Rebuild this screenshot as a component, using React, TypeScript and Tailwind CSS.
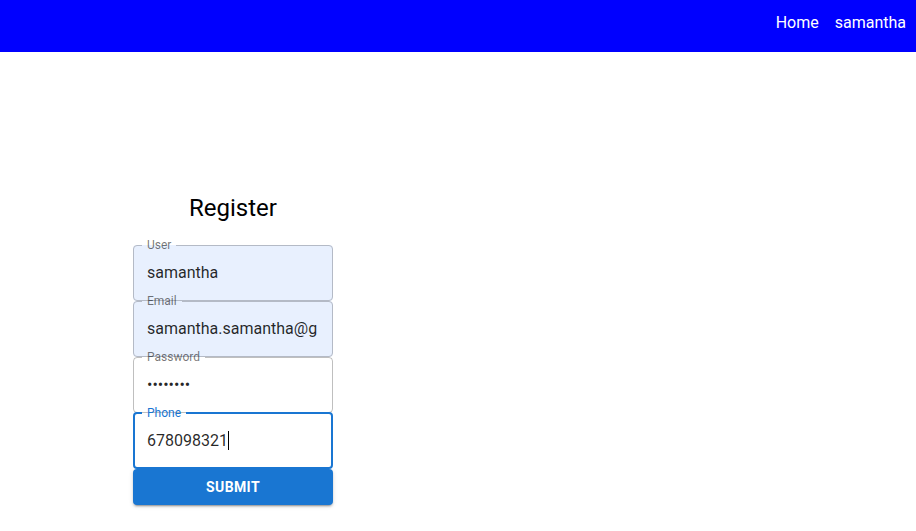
import React from "react";

type Field = {
  label: string;
  value: string;
  autofill?: boolean;
  password?: boolean;
  focused?: boolean;
};

const fields: Field[] = [
  { label: "User", value: "samantha", autofill: true },
  { label: "Email", value: "samantha.samantha@g", autofill: true },
  { label: "Password", value: "12345678", password: true },
  { label: "Phone", value: "678098321", focused: true },
];

function OutlinedField({ field }: { field: Field }) {
  return (
    <div className="relative h-14 w-full">
      <div
        className={`h-full w-full rounded-[4px] flex items-center px-[14px] ${
          field.autofill ? "bg-[#e8f0fe]" : "bg-white"
        }`}
      >
        <div className="w-full whitespace-nowrap text-base text-black/85 leading-6">
          {field.password ? (
            <input
              type="password"
              readOnly
              value={field.value}
              className="w-full bg-transparent outline-none text-base text-black/85"
            />
          ) : (
            <span>
              {field.value}
              {field.focused && (
                <span className="inline-block w-px h-[19px] bg-black align-[-4px]" />
              )}
            </span>
          )}
        </div>
      </div>
      {/* outline border with notch for the label */}
      <fieldset
        className={`pointer-events-none absolute inset-x-0 bottom-0 top-[-6px] rounded-[4px] px-2 m-0 ${
          field.focused
            ? "border-2 border-[#1976d2]"
            : field.autofill
            ? "border border-[#b4bac6]"
            : "border border-black/25"
        }`}
      >
        <legend
          className={`px-[5px] text-xs leading-3 ${
            field.focused ? "text-[#1976d2] -ml-px" : "text-black/55"
          }`}
        >
          {field.label}
        </legend>
      </fieldset>
    </div>
  );
}

export default function App() {
  return (
    <div className="min-h-screen bg-white font-['Roboto',sans-serif]">
      <header className="h-[52px] bg-[#0000ff] flex items-center justify-end pr-[10px] pb-[6px] gap-4 text-white text-base">
        <span>Home</span>
        <span>samantha</span>
      </header>

      <main className="pt-[140px] pl-[133px]">
        <div className="w-[200px] flex flex-col">
          <h2 className="text-2xl leading-8 text-black text-center mb-[21px]">Register</h2>
          {fields.map((f) => (
            <OutlinedField key={f.label} field={f} />
          ))}
          <button className="h-9 w-full rounded-[4px] bg-[#1976d2] text-white text-sm font-bold uppercase tracking-[0.4px] shadow-[0_3px_1px_-2px_rgba(0,0,0,0.2),0_2px_2px_0_rgba(0,0,0,0.14),0_1px_5px_0_rgba(0,0,0,0.12)]">
            Submit
          </button>
        </div>
      </main>
    </div>
  );
}
